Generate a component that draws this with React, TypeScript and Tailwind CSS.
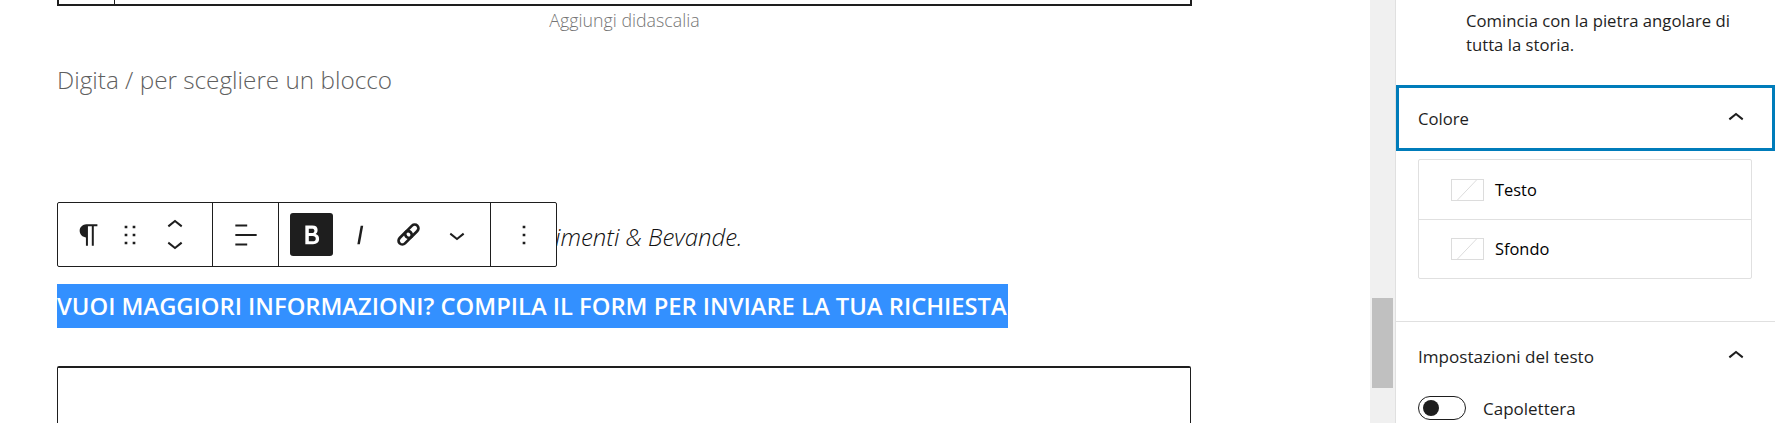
import React from 'react';

const ICON = {
  paragraph: 'M18.3 4H9.9v-.1l-.9.2c-2.3.4-4 2.4-4 4.8s1.7 4.4 4 4.8l.7.1V20h1.5V5.5h2.9V20h1.5V5.5h2.7V4z',
  drag: 'M8 7h2V5H8v2zm0 6h2v-2H8v2zm0 6h2v-2H8v2zm6-14v2h2V5h-2zm0 8h2v-2h-2v2zm0 6h2v-2h-2v2z',
  up: 'M6.5 12.4L12 8l5.5 4.4-.9 1.2L12 10l-4.5 3.6-1-1.2z',
  down: 'M17.5 11.6L12 16l-5.5-4.4.9-1.2L12 14l4.5-3.6 1 1.2z',
  align: 'M4 19.8h8.9v-1.5H4v1.5zm8.9-15.6H4v1.5h8.9V4.2zm-8.9 7v1.5h16v-1.5H4z',
  bold: 'M14.7 11.3c1-.6 1.5-1.6 1.5-3 0-2.3-1.3-3.4-4-3.4H7v14h5.8c1.4 0 2.5-.3 3.3-1 .8-.7 1.2-1.7 1.2-2.9.1-1.9-.8-3.1-2.6-3.7zm-5.1-4h2.3c.6 0 1.1.1 1.4.4.3.3.5.7.5 1.2s-.2 1-.5 1.2c-.3.3-.8.4-1.4.4H9.6V7.3zm4.6 9c-.4.3-1 .4-1.7.4H9.6v-3.9h2.9c.7 0 1.3.2 1.7.5.4.3.6.8.6 1.5s-.2 1.2-.6 1.5z',
  italic: 'M12.5 5L10 19h1.9l2.5-14z',
  more: 'M13 19h-2v-2h2v2zm0-6h-2v-2h2v2zm0-6h-2V5h2v2z',
};

function WpIcon({ d, className = 'fill-[#1e1e1e]' }: { d: string; className?: string }) {
  return (
    <svg viewBox="0 0 24 24" className={`h-8 w-8 shrink-0 ${className}`}>
      <path d={d} />
    </svg>
  );
}

// diagonal chain, the older editor link icon
function ChainIcon() {
  return (
    <svg viewBox="0 0 24 24" className="h-[25px] w-[25px] shrink-0 fill-none stroke-[#1e1e1e]" strokeWidth="2.6">
      <g transform="rotate(-45 12 12)">
        <rect x="0" y="8.4" width="15" height="7.2" rx="3.6" />
        <rect x="9" y="8.4" width="15" height="7.2" rx="3.6" />
      </g>
    </svg>
  );
}

function Swatch() {
  return (
    <svg viewBox="0 0 33 22" className="h-[22px] w-[33px] shrink-0">
      <rect x="0.5" y="0.5" width="32" height="21" fill="#fff" stroke="#dcdcdc" />
      <path d="M6 21.5L26 0.5" stroke="#dcdcdc" />
    </svg>
  );
}

function Toolbar() {
  return (
    <div className="absolute left-[57px] top-[202px] z-10 flex h-[65px] w-[500px] rounded-[2px] border border-[#1e1e1e] bg-white">
      <div className="flex w-[155px] items-center border-r border-[#1e1e1e]">
        <div className="flex w-[62px] justify-center">
          <WpIcon d={ICON.paragraph} />
        </div>
        <div className="flex w-[20px] justify-center">
          <WpIcon d={ICON.drag} />
        </div>
        <div className="flex w-[70px] flex-col items-center">
          <WpIcon d={ICON.up} />
          <div className="-mt-[13px]">
            <WpIcon d={ICON.down} />
          </div>
        </div>
      </div>
      <div className="flex w-[66px] items-center justify-center border-r border-[#1e1e1e]">
        <WpIcon d={ICON.align} />
      </div>
      <div className="flex w-[212px] items-center border-r border-[#1e1e1e] pl-[11px]">
        <div className="flex w-[47px] justify-start">
          <div className="flex h-[43px] w-[43px] items-center justify-center rounded-[3px] bg-[#1e1e1e]">
            <WpIcon d={ICON.bold} className="fill-white" />
          </div>
        </div>
        <div className="flex w-[46px] justify-center">
          <WpIcon d={ICON.italic} />
        </div>
        <div className="flex w-[50px] justify-center">
          <ChainIcon />
        </div>
        <div className="flex w-[48px] justify-center">
          <WpIcon d={ICON.down} />
        </div>
      </div>
      <div className="flex flex-1 items-center justify-center">
        <WpIcon d={ICON.more} />
      </div>
    </div>
  );
}

function Editor() {
  return (
    <div className="relative h-[423px] w-[1370px] shrink-0 overflow-hidden bg-white">
      <div className="ml-[57px] w-[1135px]">
        <div className="flex h-[6px] border-x-2 border-b-2 border-[#1e1e1e]">
          <div className="w-[56px] border-r border-[#1e1e1e]" />
        </div>
        <p className="mt-[4px] text-center text-[17.8px] leading-[20px] font-light text-[#757575]">Aggiungi didascalia</p>
        <p className="mt-[33px] h-[34px] text-[24.3px] leading-[34px] font-light text-[#5f5f5f]">Digita / per scegliere un blocco</p>
        <p className="mt-[123px] pl-[500px] text-[24px] leading-[34px] font-[350] text-[#111] italic">
          <span className="relative -left-[2px]">imenti &amp; Bevande.</span>
        </p>
        <div className="mt-[30px] h-[44px]">
          <span className="inline-block h-[44px] w-[951px] bg-[#3390ff] text-[23.75px] leading-[44px] font-semibold whitespace-nowrap text-white">
            VUOI MAGGIORI INFORMAZIONI? COMPILA IL FORM PER INVIARE LA TUA RICHIESTA
          </span>
        </div>
        <div className="mt-[38px] h-[80px] w-[1134px] rounded-[2px] border border-t-2 border-[#1e1e1e]" />
      </div>
      <Toolbar />
    </div>
  );
}

function Sidebar() {
  return (
    <div className="h-[423px] flex-1 overflow-hidden border-l border-[#e0e0e0] bg-white text-[#1e1e1e]">
      <p className="mt-[9px] h-[76px] pl-[70px] text-[16.7px] leading-[24px]">
        Comincia con la pietra angolare di
        <br />
        tutta la storia.
      </p>
      <div className="flex h-[66px] items-center justify-between border-[3px] border-[#007cba] pr-[20px] pl-[19px]">
        <span className="mt-[1px] text-[16.7px] font-medium">Colore</span>
        <div className="-mt-[1px]">
          <WpIcon d={ICON.up} />
        </div>
      </div>
      <div className="mt-[8px] ml-[22px] w-[334px] rounded-[2px] border border-[#e0e0e0]">
        <div className="flex h-[60px] items-center border-b border-[#e0e0e0] pl-[32px]">
          <Swatch />
          <span className="mt-[2px] ml-[11px] text-[16.4px] text-black">Testo</span>
        </div>
        <div className="flex h-[58px] items-center pl-[32px]">
          <Swatch />
          <span className="mt-[1px] ml-[11px] text-[16.4px] text-black">Sfondo</span>
        </div>
      </div>
      <div className="mt-[42px] border-t border-[#e0e0e0] pt-[18px] pl-[22px]">
        <div className="flex h-[34px] items-center justify-between pr-[23px]">
          <span className="text-[17.1px] font-medium">Impostazioni del testo</span>
          <div className="-mt-[2px]">
            <WpIcon d={ICON.up} />
          </div>
        </div>
        <div className="mt-[21px] flex items-center">
          <div className="flex h-[24px] w-[48px] items-center rounded-full border border-[#1e1e1e] pl-[4px]">
            <div className="h-[16px] w-[16px] rounded-full bg-[#1e1e1e]" />
          </div>
          <span className="mt-[1px] ml-[17px] text-[17px]">Capolettera</span>
        </div>
      </div>
    </div>
  );
}

export default function App() {
  return (
    <div className="flex h-[423px] w-[1775px] overflow-hidden bg-white font-['Open_Sans','Noto_Sans',sans-serif]">
      <Editor />
      {/* Scrollbar */}
      <div className="h-[423px] w-[25px] shrink-0 bg-[#f0f0f0] pt-[298px] pl-[2px]">
        <div className="h-[90px] w-[21px] bg-[#c0c0c0]" />
      </div>
      <Sidebar />
    </div>
  );
}
